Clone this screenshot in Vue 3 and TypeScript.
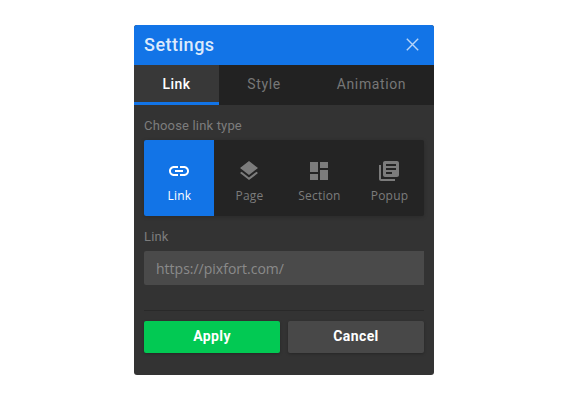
<script setup lang="ts">
import { ref } from 'vue'

interface LinkType {
  name: string
  path: string
}

const tabs: string[] = ['Link', 'Style', 'Animation']
const activeTab = ref('Link')
const activeType = ref('Link')
const url = ref('')

const linkTypes: LinkType[] = [
  {
    name: 'Link',
    path: 'M3.9 12c0-1.71 1.39-3.1 3.1-3.1h4V7H7c-2.76 0-5 2.24-5 5s2.24 5 5 5h4v-1.9H7c-1.71 0-3.1-1.39-3.1-3.1zM8 13h8v-2H8v2zm9-6h-4v1.9h4c1.71 0 3.1 1.39 3.1 3.1s-1.39 3.1-3.1 3.1h-4V17h4c2.76 0 5-2.24 5-5s-2.24-5-5-5z',
  },
  {
    name: 'Page',
    path: 'M11.99 18.54l-7.37-5.73L3 14.07l9 7 9-7-1.63-1.27-7.38 5.74zM12 16l7.36-5.73L21 9l-9-7-9 7 1.63 1.27L12 16z',
  },
  {
    name: 'Section',
    path: 'M3 13h8V3H3v10zm0 8h8v-6H3v6zm10 0h8V11h-8v10zm0-18v6h8V3h-8z',
  },
  {
    name: 'Popup',
    path: 'M4 6H2v14c0 1.1.9 2 2 2h14v-2H4V6zm16-4H8c-1.1 0-2 .9-2 2v12c0 1.1.9 2 2 2h12c1.1 0 2-.9 2-2V4c0-1.1-.9-2-2-2zm-1 9H9V9h10v2zm-4 4H9v-2h6v2zm4-8H9V5h10v2z',
  },
]
</script>

<template>
  <main class="page">
    <section class="panel">
      <header class="header">
        <h1 class="title">Settings</h1>
        <button class="close" type="button" aria-label="Close">
          <svg viewBox="0 0 13 13" width="13" height="13">
            <path d="M.8 .8L12.200 12.200M12.200 .8L.8 12.200" />
          </svg>
        </button>
      </header>

      <nav class="tabs">
        <button
          v-for="tab in tabs"
          :key="tab"
          type="button"
          class="tab"
          :class="{ active: tab === activeTab }"
          @click="activeTab = tab"
        >
          {{ tab }}
        </button>
      </nav>

      <div class="body">
        <div class="label">Choose link type</div>
        <div class="types">
          <button
            v-for="item in linkTypes"
            :key="item.name"
            type="button"
            class="type"
            :class="{ active: item.name === activeType }"
            @click="activeType = item.name"
          >
            <svg viewBox="0 0 24 24" width="24" height="24">
              <path :d="item.path" />
            </svg>
            <span>{{ item.name }}</span>
          </button>
        </div>

        <label class="label" for="url">Link</label>
        <input id="url" v-model="url" class="input" type="text" placeholder="https://pixfort.com/" />

        <footer class="actions">
          <button type="button" class="btn apply">Apply</button>
          <button type="button" class="btn cancel">Cancel</button>
        </footer>
      </div>
    </section>
  </main>
</template>

<style>
body {
  background: #fff;
}
</style>

<style scoped>
.page {
  box-sizing: border-box;
  height: 400px;
  padding-top: 25px;
  display: flex;
  justify-content: center;
  align-items: flex-start;
  font-family: Roboto, sans-serif;
}

button {
  border: 0;
  margin: 0;
  padding: 0;
  background: none;
  font: inherit;
  color: inherit;
}

.panel {
  width: 300px;
  height: 350px;
  border-radius: 3px;
  overflow: hidden;
  background: #333;
}

.header {
  box-sizing: border-box;
  height: 40px;
  padding: 0 15px 0 10px;
  display: flex;
  align-items: center;
  justify-content: space-between;
  background: #1274e7;
}

.title {
  margin: 0;
  font-size: 18px;
  line-height: 40px;
  font-weight: 500;
  letter-spacing: 0.5px;
  color: #dceafc;
}

.close {
  display: flex;
  width: 13px;
  height: 13px;
  margin-top: -2px;
}

.close path {
  fill: none;
  stroke: #b8d5f8;
  stroke-width: 1.4;
}

.tabs {
  display: grid;
  grid-template-columns: 85px 90px 125px;
  height: 40px;
  background: #222;
}

.tab {
  border-bottom: 3px solid transparent;
  font-size: 14px;
  font-weight: 400;
  letter-spacing: 0.62px;
  color: #777;
}

.tab.active {
  background: #383838;
  border-bottom-color: #1274e7;
  font-weight: 500;
  letter-spacing: 0.5px;
  color: #fff;
}

.body {
  padding: 10px 10px 0;
}

.label {
  display: block;
  height: 25px;
  line-height: 21px;
  font-size: 13px;
  font-weight: 400;
  letter-spacing: 0.17px;
  color: #7d7d7d;
}

.types {
  display: grid;
  grid-template-columns: repeat(4, 70px);
  height: 76px;
  margin-bottom: 10px;
  border-radius: 2px;
  overflow: hidden;
  background: #242424;
  box-shadow: 0 1px 4px rgba(0, 0, 0, 0.2);
}

.type {
  display: flex;
  flex-direction: column;
  align-items: center;
  padding-top: 19px;
  font-family: 'Open Sans', sans-serif;
  font-size: 12px;
  line-height: 16px;
  letter-spacing: 0.2px;
  color: #7c7c7c;
}

.type span {
  margin-top: 5px;
  padding-left: 1px;
}

.type svg {
  fill: currentColor;
}

.type.active {
  background: #1274e7;
  color: #fff;
}

.input {
  display: block;
  box-sizing: border-box;
  width: 100%;
  height: 34px;
  margin: 0;
  padding: 0 12px;
  border: 0;
  border-radius: 2px 0 0 2px;
  background: #4a4a4a;
  font-family: 'Open Sans', sans-serif;
  font-size: 14px;
  color: #ddd;
}

.input::placeholder {
  color: #8a8a8a;
}

.actions {
  display: grid;
  grid-template-columns: 1fr 1fr;
  gap: 8px;
  margin-top: 25px;
  padding-top: 10px;
  border-top: 1px solid #292929;
}

.btn {
  height: 32px;
  padding-bottom: 2px;
  border-radius: 2px;
  font-size: 14px;
  font-weight: 700;
  letter-spacing: 0.4px;
  color: #fff;
  box-shadow: 0 1px 3px rgba(0, 0, 0, 0.25);
}

.apply {
  background: #02c953;
}

.cancel {
  background: #484848;
}
</style>
